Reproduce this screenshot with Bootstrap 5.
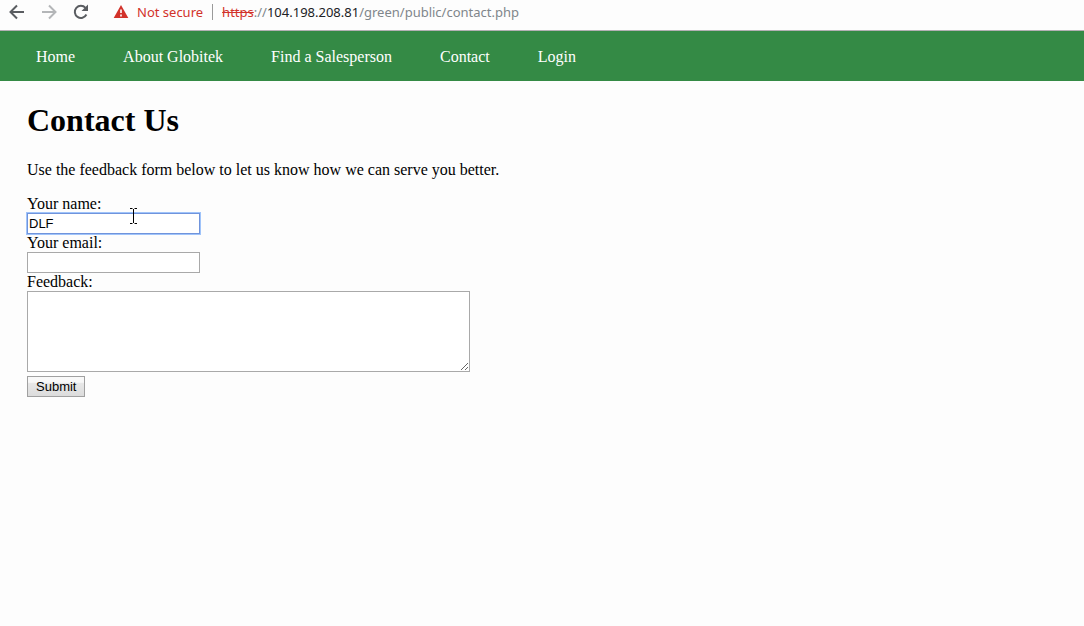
<!DOCTYPE html>
<html lang="en">
<head>
<meta charset="utf-8">
<meta name="viewport" content="width=device-width, initial-scale=1">
<title>Contact Us</title>
<link href="https://cdn.jsdelivr.net/npm/bootstrap@5.3.0/dist/css/bootstrap.min.css" rel="stylesheet">
<style>
  body { background: #fdfdfd; color: #000; font: 16px/18px "Liberation Serif", serif; }
  .toolbar { height: 31px; padding: 0 8px 6px; border-bottom: 1px solid #b4b0b4; font: 13px/18px "Noto Sans", sans-serif; }
  .tools { gap: 14px; margin-right: 23px; }
  .tool-btn { width: 18px; height: 18px; color: #5a5d61; }
  .tool-btn:disabled { color: #b4b6b8; opacity: 1; }
  .tool-btn svg { display: block; }
  .alert-tone { color: #d2322a; }
  .divider { width: 1px; height: 16px; background: #9a9a9a; margin: 0 9px; }
  .url { color: #80868b; }
  .url b { color: #202124; font-weight: 400; }
  .site-nav { background: #348a45; min-height: 50px; padding: 2px 36px 0; gap: 8px 48px; }
  .site-nav a { color: #fff; line-height: 18px; }
  main { padding: 20px 27px; }
  h1 { font-size: 32px; line-height: 38px; font-weight: 700; margin-bottom: 22px; }
  .intro { margin-bottom: 16px; }
  .field { display: block; border: 1px solid #a9a9a9; border-radius: 0; background: #fff; color: #000; font: 13px/15px "Liberation Sans", sans-serif; padding: 2px 1px; }
  .line-field { width: 173px; height: 21px; }
  .field:focus, .field.active { outline: 0; border-color: #7094dc; box-shadow: 0 0 0 1px #a0c4fa; }
  .area-field { width: 443px; max-width: 100%; height: 81px; }
  .submit-btn { border: 1px solid #a0a0a0; background: linear-gradient(#f8f8f8 28%, #e8e8e8 32%, #dcdcdc); color: #000; font: 13px/17px "Liberation Sans", sans-serif; padding: 1px 8px; margin-top: 4px; }
  .pointer { left: 102px; top: 13px; }
</style>
</head>
<body>
<header>
  <div class="toolbar d-flex align-items-center">
    <div class="tools d-flex">
      <button class="tool-btn border-0 bg-transparent p-0" aria-label="Back"><svg width="18" height="18" viewBox="0 0 18 18" fill="none" stroke="currentColor" stroke-width="2"><path d="M16 9H3M9 2.500 2.500 9 9 15.500"/></svg></button>
      <button class="tool-btn border-0 bg-transparent p-0" disabled aria-label="Forward"><svg width="18" height="18" viewBox="0 0 18 18" fill="none" stroke="currentColor" stroke-width="2"><path d="M2 9h13M9 2.500 15.500 9 9 15.500"/></svg></button>
      <button class="tool-btn border-0 bg-transparent p-0" aria-label="Reload"><svg width="18" height="18" viewBox="0 0 18 18"><path d="M13.500 4.800A6.100 6.100 0 1 0 14.400 11.500" fill="none" stroke="currentColor" stroke-width="2"/><path d="M16 1.500V8H9.500z" fill="currentColor"/></svg></button>
    </div>
    <svg class="me-2" width="16" height="16" viewBox="0 0 16 16" aria-hidden="true"><path d="M8 1 15.300 14H.7z" fill="#d2322a"/><path d="M8 5.500v3.500M8 10.500v2" stroke="#fff" stroke-width="1.600"/></svg>
    <span class="alert-tone">Not secure</span>
    <span class="divider"></span>
    <span class="url text-truncate"><s class="alert-tone">https</s>://<b>104.198.208.81</b>/green/public/contact.php</span>
  </div>
  <nav class="site-nav d-flex flex-wrap align-items-center">
    <a class="text-decoration-none" href="#">Home</a>
    <a class="text-decoration-none" href="#">About Globitek</a>
    <a class="text-decoration-none" href="#">Find a Salesperson</a>
    <a class="text-decoration-none" href="#">Contact</a>
    <a class="text-decoration-none" href="#">Login</a>
  </nav>
</header>
<main>
  <h1>Contact Us</h1>
  <p class="intro">Use the feedback form below to let us know how we can serve you better.</p>
  <form>
    <div class="position-relative">
      <label class="d-block" for="name">Your name:</label>
      <input class="field line-field active" type="text" id="name" value="DLF">
      <svg class="pointer position-absolute" width="9" height="17" viewBox="0 0 9 17" fill="none" stroke="#000" aria-hidden="true"><path d="M1 .5h2.500M5.500 .5H8M4.500 1v14M1 15.500h2.500M5.500 15.500H8"/></svg>
    </div>
    <label class="d-block" for="email">Your email:</label>
    <input class="field line-field" type="text" id="email">
    <label class="d-block" for="feedback">Feedback:</label>
    <textarea class="field area-field" id="feedback"></textarea>
    <button class="submit-btn" type="submit">Submit</button>
  </form>
</main>
<script src="https://cdn.jsdelivr.net/npm/bootstrap@5.3.0/dist/js/bootstrap.bundle.min.js"></script>
</body>
</html>
